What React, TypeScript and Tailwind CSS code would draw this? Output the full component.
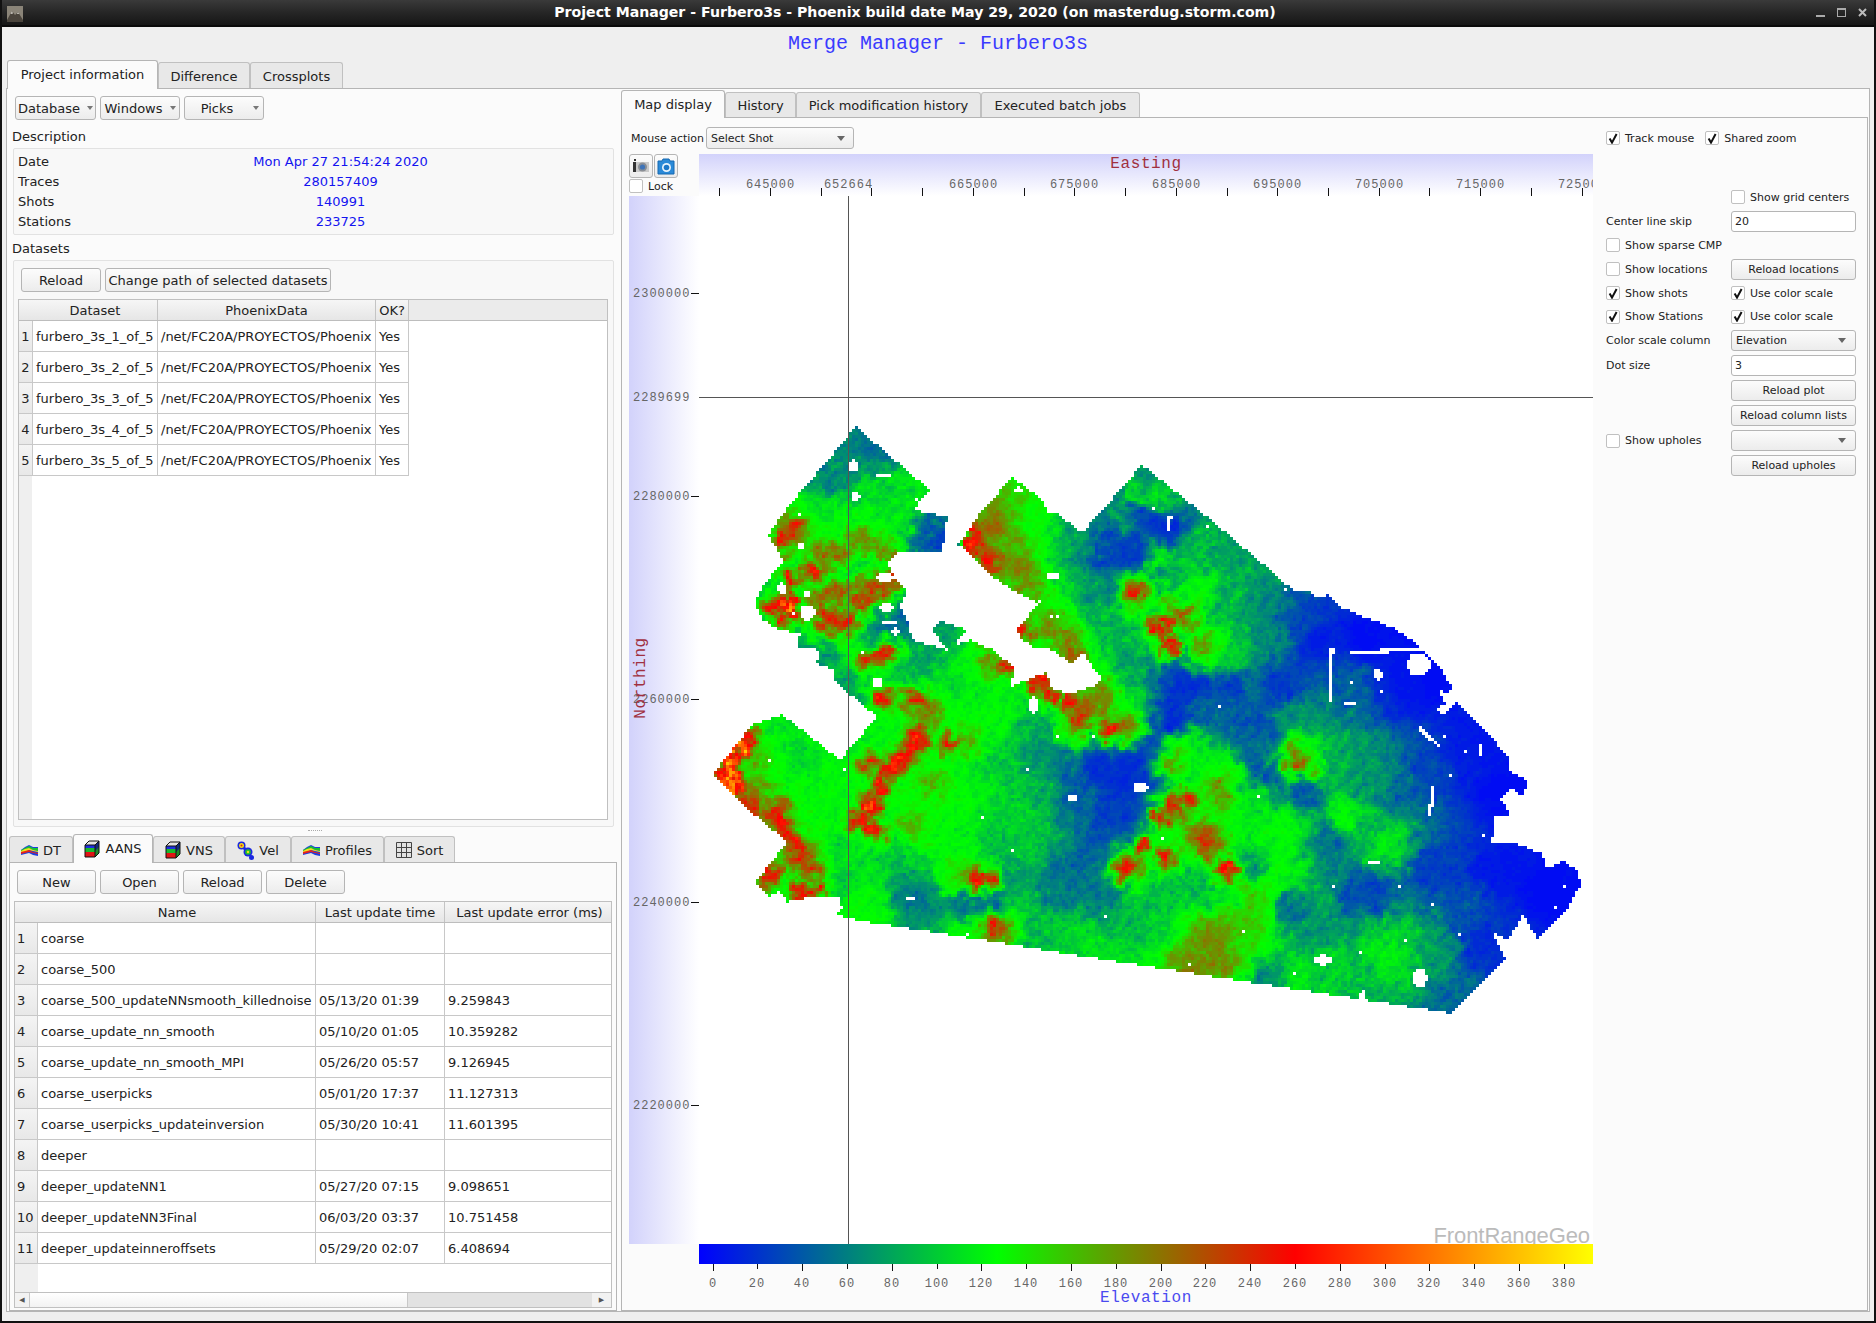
import { useMemo, type ReactNode } from 'react';

// ---- elevation map data, in page coordinates ----
const OUTLINE: number[][] = [
  [856,427],[930,490],[913,510],[947,517],[942,553],[900,552],[887,563],[893,575],[908,590],[900,607],[907,620],[913,640],[948,650],[932,630],[940,621],[967,630],[953,647],[970,640],[993,650],[1013,667],[1012,687],[1022,682],[1047,672],[1053,690],[1070,693],[1093,687],[1102,680],[1093,667],[1083,653],[1072,665],[1053,650],[1033,647],[1023,640],[1015,630],[1028,617],[1038,603],[1013,590],[993,577],[987,570],[968,552],[958,545],[967,533],[977,517],[1007,483],[1013,477],[1020,483],[1043,500],[1047,512],[1058,513],[1077,530],[1083,532],[1142,465],[1192,505],[1207,517],[1250,553],[1293,590],[1312,592],[1313,597],[1330,595],[1340,607],[1367,618],[1393,628],[1413,641],[1440,668],[1452,687],[1447,693],[1440,691],[1445,704],[1438,718],[1458,702],[1483,729],[1510,758],[1510,771],[1528,781],[1523,796],[1512,789],[1500,798],[1512,817],[1495,815],[1493,836],[1490,844],[1513,842],[1543,854],[1545,869],[1565,861],[1577,871],[1581,884],[1567,909],[1537,938],[1523,915],[1508,940],[1493,932],[1505,959],[1450,1013],[1100,959],[933,932],[867,922],[837,915],[842,908],[838,897],[810,897],[787,902],[780,890],[770,897],[755,883],[787,842],[743,805],[712,775],[753,724],[783,715],[840,760],[877,717],[833,680],[833,670],[817,663],[820,650],[798,647],[800,633],[780,630],[763,620],[755,602],[765,583],[785,560],[780,557],[777,548],[768,535],[787,508],
];

// x, y, elevation
const SPOTS: number[][] = [
  [856,435,60],[880,450,50],[850,470,70],[830,480,65],[870,490,110],[900,490,105],[920,495,115],[830,510,110],[800,520,115],[860,530,120],[790,530,230],[780,535,245],[780,545,250],[810,540,130],[900,520,110],[930,530,45],[940,540,30],[915,545,40],[840,555,190],[825,558,200],[860,575,60],[830,580,110],[790,580,260],[810,572,255],[785,600,290],[790,603,340],[775,605,265],[795,615,270],[780,620,270],[860,625,55],[880,610,55],[900,610,40],[890,630,45],[830,640,60],[860,660,110],[920,660,80],[950,680,100],[990,660,190],[1005,665,250],[1010,668,260],[850,690,80],[880,700,120],[883,698,265],[913,700,265],[925,710,200],[950,715,120],[1000,710,120],[980,760,100],
  [870,763,280],[882,787,265],[870,807,300],[920,737,270],[947,743,245],[933,780,170],[967,740,170],[940,803,125],[967,787,120],[900,787,125],[1033,787,90],[1000,800,100],[1020,850,90],
  [1100,770,15],[1130,760,8],[1150,780,15],[1060,750,60],[1040,720,85],[1080,800,45],[1100,861,40],[1120,775,15],[1113,814,25],[1150,749,10],[1172,725,5],
  [1143,846,265],[1128,867,235],[1167,858,265],[1160,819,260],[1188,800,250],[1227,869,285],[1203,840,230],[1183,830,130],[1217,815,130],[1233,795,120],[1257,871,55],[1233,902,70],[1200,890,80],[1167,890,90],[1133,900,85],[1133,928,90],[1113,890,50],
  [1280,825,125],[1273,863,125],[1263,898,145],[1213,940,185],[1193,967,190],[1220,963,190],[1240,936,150],[1287,909,45],[1317,928,70],[1333,963,95],[1400,947,100],[1387,959,115],[1433,947,75],[1450,1005,50],[1367,993,85],[1300,982,110],[1267,974,60],
  [1367,890,30],[1433,871,25],[1500,871,5],[1550,890,0],[1467,909,35],[1483,944,15],[1300,741,95],[1297,760,215],[1317,771,120],[1287,718,75],[1333,764,80],[1307,787,30],[1267,783,25],[1260,756,40],[1280,687,18],[1233,680,8],[1200,680,10],[1183,695,15],[1200,710,50],[1233,725,45],[1250,756,55],[1267,725,30],
  [1343,817,125],[1383,844,110],[1367,833,85],[1333,840,50],[1400,794,50],[1373,779,70],[1433,775,30],[1350,680,45],[1400,680,5],[1467,756,10],[1317,641,8],[1367,641,0],[1433,680,0],[1300,622,30],[1267,603,65],[1267,641,65],[1233,603,85],[1233,641,100],[1217,664,90],[1500,790,0],[1420,630,0],[1480,745,5],
  [1142,473,70],[1133,496,120],[1160,500,110],[1140,515,25],[1120,525,100],[1167,527,10],[1120,542,20],[1190,546,90],[1217,557,80],[1200,584,120],[1157,557,120],[1150,580,50],[1140,595,170],[1137,594,240],[1120,595,50],[1157,595,40],[1167,603,170],[1183,615,200],[1157,628,265],[1170,626,250],[1167,645,250],[1200,649,190],[1223,641,100],[1233,668,115],[1140,641,90],[1133,680,85],[1100,699,190],[1113,729,265],[1133,725,110],[1170,680,30],[1183,680,12],[1207,668,10],[1180,741,130],[1170,764,170],[1200,756,110],[1233,768,115],[1260,794,115],[1217,787,185],
  [1000,503,165],[993,527,200],[977,537,265],[973,547,280],[990,560,250],[1017,570,200],[1033,580,170],[1033,520,130],[1067,547,95],[1083,560,70],[1100,553,30],[1110,533,25],[1133,553,15],[1150,520,20],[1117,500,60],[1083,540,70],[1067,587,100],[1083,593,70],[1100,613,85],[1047,627,185],[1067,643,190],[1073,653,210],[1023,630,265],[1050,613,120],[1133,620,85],[1137,593,220],[1160,630,265],
  [1040,683,265],[1048,697,265],[1070,703,260],[1077,720,220],[1107,730,255],[1120,727,200],[1083,713,210],[1100,697,160],[1127,687,100],[1150,660,70],[1050,720,80],[1067,737,110],[1050,753,70],[1067,767,45],[1173,803,225],
  [733,753,260],[743,747,340],[733,787,340],[727,770,280],[750,737,260],[757,753,170],[783,737,110],[800,753,95],[817,787,115],[767,787,140],[750,803,230],[773,813,170],[800,803,125],
  [777,813,260],[785,827,265],[793,840,260],[800,857,230],[808,867,230],[770,877,265],[800,893,265],[813,890,250],[860,820,265],[873,830,275],[913,827,170],[917,897,60],[967,907,45],[993,907,25],[860,907,125],[967,930,125],[977,878,265],[960,878,150],[993,877,240],[993,930,230],[833,880,90],[850,853,105],[900,857,90],[933,830,115],[817,830,120],[766,825,160],[1017,909,95],[1029,945,90],[1077,945,100],[1029,837,95],[1100,957,105],
  [820,720,120],[900,720,122],[960,800,122],[860,850,105],[830,760,124],[800,700,122],[1000,880,70],[1060,880,55],[1160,930,100],[1040,660,122],[900,650,90],
  [985,510,165],[1010,530,165],[1000,550,165],[1020,555,160],[1040,600,150],[1060,620,150],
];

// x1, y1, x2, y2, elevation
const RIDGES: number[][] = [
  [860,540,890,555,175],[820,600,890,580,210],[825,620,845,622,235],[870,660,890,650,245],[887,770,913,747,265],[850,570,880,565,60],[733,747,727,790,330],[777,813,793,840,260],[860,600,900,575,215],[1193,965,1255,895,165],
];

// ellipses in the survey with no data: x1, y1, x2, y2
const HOLES: number[][] = [
  [848,460,858,472],[877,474,892,478],[852,492,860,502],[778,583,787,595],[803,590,810,597],[800,605,815,620],[877,573,893,583],[882,620,897,625],[892,628,900,635],[880,602,893,613],[872,677,882,687],[1047,573,1060,580],[1028,697,1038,713],[1067,795,1077,802],[1133,783,1148,793],[1015,487,1022,493],[798,543,805,548],[1407,653,1430,676],[1373,668,1382,680],[1343,703,1358,706],[1478,745,1483,756],[1367,861,1380,865],[1315,955,1332,965],[1412,968,1427,988],[1360,990,1365,1001],[907,897,914,900],
];

// thin cuts: x1, y1, x2, y2
const CUTS: number[][] = [
  [1332,649,1330,699],[1353,653,1385,651],[1385,651,1420,649],[1433,787,1430,814],[1420,729,1438,745],[1438,710,1453,702],[1170,517,1168,528],
];

const hash = (x: number, y: number) => {
  const s = Math.sin(x * 127.1 + y * 311.7) * 43758.5453;
  return s - Math.floor(s);
};

const valueNoise = (x: number, y: number) => {
  const ix = Math.floor(x);
  const iy = Math.floor(y);
  const fx = x - ix;
  const fy = y - iy;
  const a = hash(ix, iy);
  const b = hash(ix + 1, iy);
  const c = hash(ix, iy + 1);
  const d = hash(ix + 1, iy + 1);
  return (a * (1 - fx) + b * fx) * (1 - fy) + (c * (1 - fx) + d * fx) * fy;
};

const inside = (x: number, y: number) => {
  let hit = false;
  for (let i = 0, j = OUTLINE.length - 1; i < OUTLINE.length; j = i++) {
    const [xi, yi] = OUTLINE[i];
    const [xj, yj] = OUTLINE[j];
    if (yi > y !== yj > y && x < ((xj - xi) * (y - yi)) / (yj - yi) + xi) hit = !hit;
  }
  return hit;
};

const inHole = (x: number, y: number) => {
  for (const [a, b, c, d] of HOLES) {
    const rx = (c - a) / 2;
    const ry = (d - b) / 2;
    const dx = (x - (a + c) / 2) / rx;
    const dy = (y - (b + d) / 2) / ry;
    if (dx * dx + dy * dy < 1) return true;
  }
  for (const [a, b, c, d] of CUTS) {
    const vx = c - a;
    const vy = d - b;
    const t = Math.max(0, Math.min(1, ((x - a) * vx + (y - b) * vy) / (vx * vx + vy * vy)));
    const px = a + vx * t - x;
    const py = b + vy * t - y;
    if (px * px + py * py < 3) return true;
  }
  return false;
};

const elevationColor = (e: number) => {
  const t = Math.max(0, Math.min(399, e + 6)) / 133;
  const f = t % 1;
  if (t < 1) return `rgb(0,${Math.round(f * 255)},${Math.round((1 - f) * 255)})`;
  if (t < 2) return `rgb(${Math.round(f * 255)},${Math.round((1 - f) * 255)},0)`;
  return `rgb(255,${Math.round(f * 255)},0)`;
};

function buildMapPaths() {
  const all = [...SPOTS];
  for (const [a, b, c, d, e] of RIDGES) {
    const n = Math.ceil(Math.hypot(c - a, d - b) / 8);
    for (let i = 0; i <= n; i++) all.push([a + ((c - a) * i) / n, b + ((d - b) * i) / n, e]);
  }
  // low ground is interpolated, high ground sits on top as narrow bumps
  const low = all.filter((p) => p[2] < 170);
  const peaks = all.filter((p) => p[2] >= 170);
  const buckets = new Map<number, string[]>();
  const cell = 3;
  for (let y = 426; y < 1016; y += cell) {
    for (let x = 711; x < 1584; x += cell) {
      const cx = x + 1.5;
      const cy = y + 1.5;
      if (!inside(cx, cy) || inHole(cx, cy)) continue;
      if (hash(x * 0.37, y * 0.91) < 0.0012) continue;
      // crumple the lookup so that regions get ragged edges
      const wx = cx + (valueNoise(cx / 6, cy / 6) - 0.5) * 16;
      const wy = cy + (valueNoise(cy / 6 + 40, cx / 6) - 0.5) * 16;
      let sum = 0;
      let weight = 0;
      for (const p of low) {
        const dx = p[0] - wx;
        const dy = p[1] - wy;
        const d = dx * dx + dy * dy + 120;
        const w = 1 / (d * d);
        sum += p[2] * w;
        weight += w;
      }
      const base = sum / weight;
      let e = base;
      for (const p of peaks) {
        const dx = p[0] - wx;
        const dy = p[1] - wy;
        const sigma = p[2] > 300 ? 6 : p[2] >= 240 ? 8 : 13;
        const g = Math.exp(-(dx * dx + dy * dy) / (2 * sigma * sigma));
        e = Math.max(e, base + (p[2] - base) * g);
      }
      const amp = Math.min(1, base / 50 + 0.08);
      const bump = 1 + Math.max(0, e - base) / 120;
      e += amp * bump * ((valueNoise(cx / 4, cy / 4) - 0.5) * 26 + (valueNoise((cx + cy) / 7, (cx - cy) / 18) - 0.5) * 20 + (hash(x, y) - 0.5) * 12);
      // mid elevations bunch up around pure green
      const off = e - 127;
      if (Math.abs(off) < 45) e = 127 + off * (0.45 + (0.55 * Math.abs(off)) / 45);
      const key = Math.round(e / 4) * 4;
      if (!buckets.has(key)) buckets.set(key, []);
      buckets.get(key)!.push(`M${x} ${y}h3v3h-3z`);
    }
  }
  return [...buckets.entries()].map(([key, list]) => ({ color: elevationColor(key), d: list.join('') }));
}

// ---- small widgets ----
const btnBase = 'flex items-center rounded-[3px] border border-[#b5b5b5] bg-gradient-to-b from-[#fcfcfc] to-[#ececec] text-[#222]';
const btn = `${btnBase} justify-center`;

function TabBtn({ active, className, children }: { active?: boolean; className: string; children: ReactNode }) {
  return active ? (
    <div className={`relative z-10 -mb-px flex items-center justify-center gap-[5px] rounded-t-[3px] border border-b-0 border-[#b5b5b5] bg-[#fbfbfb] pb-px ${className}`}>{children}</div>
  ) : (
    <div className={`mt-[2px] flex items-center justify-center gap-[5px] rounded-t-[3px] border border-b-0 border-[#c0c0c0] bg-[#e8e8e8] pt-px ${className}`}>{children}</div>
  );
}

function Caret() {
  return (
    <svg width="8" height="5" viewBox="0 0 8 5" className="shrink-0">
      <path d="M0 0h8L4 5z" fill="#666" />
    </svg>
  );
}

function TinyCaret() {
  return (
    <svg width="6" height="4" viewBox="0 0 6 4" className="shrink-0">
      <path d="M0 0h6L3 4z" fill="#777" />
    </svg>
  );
}

function Check({ on, label, className = '' }: { on?: boolean; label: string; className?: string }) {
  return (
    <div className={`flex items-center gap-[5px] ${className}`}>
      <div className="flex h-[14px] w-[14px] shrink-0 items-center justify-center rounded-[2px] border border-[#c0c0c0] bg-white">
        {on && (
          <svg width="10" height="11" viewBox="0 0 10 11">
            <path d="M1.6 5.6 4 9.6 8.6 1" fill="none" stroke="#111" strokeWidth="2" />
          </svg>
        )}
      </div>
      <span>{label}</span>
    </div>
  );
}

function WaveIcon() {
  return (
    <svg width="17" height="12" viewBox="0 0 17 12" className="shrink-0">
      <path d="M0 6 4 3 8 1l4 2 5 0v9l-5-1-4-2-4 1-4 1z" fill="#1c3fe0" />
      <path d="M0 6 4 4 8 2l4 2 5 0v3l-5-1-4-2-4 2-4 1z" fill="#18c42c" />
      <path d="M0 7 4 5 8 4l4 2 5 1v1l-5-1-4-1-4 2-4 1z" fill="#f2e11c" />
      <path d="M0 8 4 7l4-1 4 2 5 1v1l-5-1-4-1-4 1-4 1z" fill="#e8231a" />
    </svg>
  );
}

function CubeIcon() {
  return (
    <svg width="16" height="18" viewBox="0 0 16 18" className="shrink-0">
      <path d="M1 5h10v12H1z" fill="#e01414" />
      <path d="M1 5h10v4H1z" fill="#1c2fe0" />
      <path d="M1 8h10v4H1z" fill="#18b82c" />
      <path d="M11 5l4-4v12l-4 4z" fill="#122a7a" />
      <path d="M11 11l4-4v6l-4 4z" fill="#1f8a2a" />
      <path d="M1 5l4-4h10l-4 4z" fill="#e4e4e4" />
      <path d="M1 5l4-4h10v12l-4 4H1zM1 5h10v12M11 5l4-4" fill="none" stroke="#111" strokeWidth="1" />
    </svg>
  );
}

function VelIcon() {
  return (
    <svg width="17" height="19" viewBox="0 0 17 19" className="shrink-0">
      <circle cx="4.5" cy="4.5" r="4" fill="#1a28e0" />
      <circle cx="11" cy="11" r="4.5" fill="#1a28e0" />
      <circle cx="14.5" cy="16.5" r="2.5" fill="#1a28e0" />
      <path d="M6 6l5 5" stroke="#1a28e0" strokeWidth="3" />
      <circle cx="4.5" cy="4.5" r="2.5" fill="#f0dc1c" />
      <circle cx="11" cy="11" r="2.8" fill="#22c02c" />
      <circle cx="4.5" cy="4.5" r="1" fill="#e0201c" />
      <circle cx="11" cy="11" r="1.2" fill="#f0dc1c" />
    </svg>
  );
}

function GridIcon() {
  return (
    <svg width="16" height="16" viewBox="0 0 16 16" className="shrink-0">
      <path d="M.5.5h15v15H.5z" fill="#e2e2e2" stroke="#444" />
      <path d="M5.5.5v15M10.5.5v15M.5 5.5h15M.5 10.5h15" stroke="#444" />
    </svg>
  );
}

function CameraIcon({ blue }: { blue?: boolean }) {
  return blue ? (
    <svg width="18" height="18" viewBox="0 0 18 18">
      <path d="M1 4h4l1-2h6l1 2h4v13H1z" fill="#2a8ad8" stroke="#1668b0" />
      <circle cx="9.5" cy="10.5" r="4.5" fill="#e8f4fc" />
      <circle cx="9.5" cy="10.5" r="2.8" fill="#1c78c8" />
    </svg>
  ) : (
    <svg width="18" height="18" viewBox="0 0 18 18">
      <path d="M4 5h13v10H4z" fill="#c9c9c9" />
      <path d="M1 5h3v10H1zM2 2h2v2H2z" fill="#333" />
      <circle cx="10.5" cy="10" r="4.5" fill="#8a8f96" />
      <circle cx="10.5" cy="10" r="2.6" fill="#3f74b8" />
    </svg>
  );
}

function Row({ h, left, right }: { h: string; left?: ReactNode; right?: ReactNode }) {
  return (
    <div className={`grid grid-cols-[125px_125px] items-center ${h}`}>
      <div className="flex items-center">{left}</div>
      <div>{right}</div>
    </div>
  );
}

const DATASETS = ['furbero_3s_1_of_5', 'furbero_3s_2_of_5', 'furbero_3s_3_of_5', 'furbero_3s_4_of_5', 'furbero_3s_5_of_5'];

const MODELS = [
  ['coarse', '', ''],
  ['coarse_500', '', ''],
  ['coarse_500_updateNNsmooth_killednoise', '05/13/20 01:39', '9.259843'],
  ['coarse_update_nn_smooth', '05/10/20 01:05', '10.359282'],
  ['coarse_update_nn_smooth_MPI', '05/26/20 05:57', '9.126945'],
  ['coarse_userpicks', '05/01/20 17:37', '11.127313'],
  ['coarse_userpicks_updateinversion', '05/30/20 10:41', '11.601395'],
  ['deeper', '', ''],
  ['deeper_updateNN1', '05/27/20 07:15', '9.098651'],
  ['deeper_updateNN3Final', '06/03/20 03:37', '10.751458'],
  ['deeper_updateinneroffsets', '05/29/20 02:07', '6.408694'],
];

const headCell = 'flex items-center justify-center border-r border-[#c4c4c4] bg-gradient-to-b from-[#f6f6f6] to-[#e6e6e6]';
const bodyCell = 'flex items-center border-r border-b border-[#c8c8c8] pl-[3px]';
const gutterCell = 'flex items-center border-r border-b border-[#c8c8c8] bg-gradient-to-b from-[#f4f4f4] to-[#e8e8e8]';

function MapChart() {
  const paths = useMemo(buildMapPaths, []);
  const topTicks = Array.from({ length: 18 }, (_, i) => 719.3 + i * 50.72);
  const topLabels: [string, number][] = [['645000', 770], ['652664', 848], ['665000', 973], ['675000', 1074], ['685000', 1176], ['695000', 1277], ['705000', 1379], ['715000', 1480], ['725000', 1582]];
  const leftLabels: [string, number][] = [['2300000', 293], ['2280000', 496], ['2260000', 699], ['2240000', 902], ['2220000', 1105]];
  const scale = Array.from({ length: 20 }, (_, i) => i * 20);
  const axisText = "font-['Liberation_Mono',monospace] text-[12px] tracking-[1px] fill-[#666]";
  const titleText = "font-['Liberation_Mono',monospace] text-[16px] tracking-[0.6px]";

  return (
    <svg width="964" height="1156" viewBox="629 154 964 1156" className="block">
      <defs>
        <linearGradient id="bandTop" x1="0" y1="0" x2="0" y2="1">
          <stop offset="0" stopColor="#d2d2fb" />
          <stop offset="1" stopColor="#ffffff" />
        </linearGradient>
        <linearGradient id="bandLeft" x1="0" y1="0" x2="1" y2="0">
          <stop offset="0" stopColor="#d2d2fb" />
          <stop offset="1" stopColor="#ffffff" />
        </linearGradient>
        <linearGradient id="colorBar" x1="0" y1="0" x2="1" y2="0">
          <stop offset="0" stopColor="#0000ff" />
          <stop offset="0.3333" stopColor="#00ff00" />
          <stop offset="0.6667" stopColor="#ff0000" />
          <stop offset="1" stopColor="#ffff00" />
        </linearGradient>
        <clipPath id="topClip">
          <rect x="699" y="154" width="894" height="42" />
        </clipPath>
      </defs>
      <rect x="699" y="154" width="894" height="42" fill="url(#bandTop)" />
      <rect x="629" y="196" width="70" height="1048" fill="url(#bandLeft)" />
      <rect x="699" y="196" width="894" height="1048" fill="#fff" />

      <text x="1146" y="168" textAnchor="middle" fill="#a03040" className={titleText}>Easting</text>
      <g clipPath="url(#topClip)">
        {topLabels.map(([t, x]) => (
          <text key={t} x={x + 0.5} y="188" textAnchor="middle" className={axisText}>{t}</text>
        ))}
        {topTicks.map((x) => (
          <path key={x} d={`M${Math.round(x) + 0.5} 188v8`} stroke="#111" />
        ))}
      </g>

      {leftLabels.map(([t, y]) => (
        <g key={t}>
          <text x="633" y={y + 4} className={axisText}>{t}</text>
          <path d={`M691 ${y + 0.5}h8`} stroke="#111" />
        </g>
      ))}
      <text x="633" y="401" className={axisText}>2289699</text>
      <text transform="translate(645 678) rotate(-90)" textAnchor="middle" fill="#a03040" className={titleText}>Northing</text>

      <g shapeRendering="crispEdges">
        {paths.map((p) => (
          <path key={p.color} d={p.d} fill={p.color} />
        ))}
      </g>

      <path d="M848.5 196V1244M699 397.5H1593" stroke="#555" shapeRendering="crispEdges" />

      <text x="1590" y="1243" textAnchor="end" fill="#bbb" className="font-['Liberation_Sans',sans-serif] text-[22px] tracking-[-0.1px]">FrontRangeGeo</text>

      <rect x="699" y="1244" width="894" height="20" fill="url(#colorBar)" />
      {scale.map((v, i) => {
        const x = Math.round(712.5 + v * 2.2405);
        return (
          <g key={v}>
            <path d={`M${x + 0.5} 1264v${i % 2 ? 5 : 7}`} stroke="#111" />
            <text x={x} y="1287" textAnchor="middle" className={axisText}>{v}</text>
          </g>
        );
      })}
      <text x="1146" y="1302" textAnchor="middle" fill="#4a4af0" className={titleText}>Elevation</text>
    </svg>
  );
}

export default function App() {
  return (
    <div className="flex h-[1323px] w-[1876px] flex-col overflow-hidden border-x-2 border-b-2 border-[#111] bg-[#efefef] font-['DejaVu_Sans',sans-serif] text-[13px] leading-none text-[#222]">
      {/* window title bar */}
      <div className="-mx-[2px] relative flex h-[27px] shrink-0 items-center justify-center border-b-2 border-[#0a0a0a] bg-gradient-to-b from-[#3a3a3a] via-[#262626] to-[#161616] pr-[46px] text-[14.1px] font-bold text-white">
        <svg width="16" height="16" viewBox="0 0 16 16" className="absolute left-[7px] top-[6px]">
          <rect width="16" height="16" fill="#8a8478" />
          <path d="M0 14 5 5l3 4 3-3 5 8v2H0z" fill="#4a443c" />
          <path d="M5 5 3.5 8 6 7.5zM11 6l-1 2 2 0z" fill="#d8d4cc" />
        </svg>
        <span>Project Manager - Furbero3s - Phoenix build date May 29, 2020 (on masterdug.storm.com)</span>
        <div className="absolute right-[9px] top-[7px] flex items-center gap-[12px]">
          <div className="mt-[8px] h-[2px] w-[9px] bg-[#aaa]" />
          <div className="h-[9px] w-[9px] border border-t-2 border-[#aaa]" />
          <svg width="9" height="9" viewBox="0 0 9 9">
            <path d="M1 1l7 7M8 1 1 8" stroke="#bbb" strokeWidth="2" />
          </svg>
        </div>
      </div>

      <div className="flex h-[33px] shrink-0 items-center justify-center pt-px font-['Liberation_Mono',monospace] text-[20px] text-[#3a3aff]">
        Merge Manager - Furbero3s
      </div>

      {/* outer tabs */}
      <div className="ml-[5px] flex h-[28px] shrink-0 items-stretch">
        <TabBtn active className="w-[151px]">Project information</TabBtn>
        <TabBtn className="w-[92px]">Difference</TabBtn>
        <TabBtn className="w-[93px]">Crossplots</TabBtn>
      </div>

      <div className="ml-[4px] flex h-[1224px] w-[1864px] shrink-0 border border-[#b5b5b5] bg-[#fbfbfb]">
        {/* left side */}
        <div className="flex w-[613px] shrink-0 flex-col pl-[2px]">
          <div className="mt-[7px] flex h-[24px] gap-[4px] pl-[6px]">
            <div className={`${btn} w-[81px] gap-[7px]`}>Database<TinyCaret /></div>
            <div className={`${btn} w-[80px] gap-[7px]`}>Windows<TinyCaret /></div>
            <div className={`${btn} w-[80px] gap-[20px] pl-[12px]`}>Picks<TinyCaret /></div>
          </div>
          <div className="flex h-[28px] items-center pl-[3px] pt-[5px]">Description</div>
          <div className="ml-[4px] h-[87px] w-[601px] rounded-[2px] border border-[#e2e2e2] bg-[#f8f8f8] py-[2px]">
            {[
              ['Date', 'Mon Apr 27 21:54:24 2020'],
              ['Traces', '280157409'],
              ['Shots', '140991'],
              ['Stations', '233725'],
            ].map(([k, v]) => (
              <div key={k} className="flex h-[20px] items-center pl-[4px]">
                <span className="w-[50px]">{k}</span>
                <span className="flex-1 text-center text-[#1414f0]">{v}</span>
              </div>
            ))}
          </div>
          <div className="flex h-[25px] items-center pl-[3px] pt-[2px]">Datasets</div>
          <div className="ml-[4px] flex h-[567px] w-[601px] flex-col rounded-[2px] border border-[#e2e2e2] bg-[#f8f8f8] pl-[4px] pt-[7px]">
            <div className="flex h-[24px] gap-[4px] pl-[3px]">
              <div className={`${btn} w-[80px]`}>Reload</div>
              <div className={`${btn} w-[226px]`}>Change path of selected datasets</div>
            </div>
            <div className="mt-[7px] flex h-[521px] w-[590px] flex-col border border-[#c0c0c0] bg-white">
              <div className="flex h-[21px] shrink-0 border-b border-[#bdbdbd] bg-[#ebebeb]">
                <div className={`${headCell} w-[139px] pl-[14px]`}>Dataset</div>
                <div className={`${headCell} w-[218px]`}>PhoenixData</div>
                <div className={`${headCell} w-[33px]`}>OK?</div>
              </div>
              {DATASETS.map((d, i) => (
                <div key={d} className="flex h-[31px] shrink-0">
                  <div className={`${gutterCell} w-[14px] justify-center`}>{i + 1}</div>
                  <div className={`${bodyCell} w-[125px]`}>{d}</div>
                  <div className={`${bodyCell} w-[218px]`}>/net/FC20A/PROYECTOS/Phoenix</div>
                  <div className={`${bodyCell} w-[33px]`}>Yes</div>
                </div>
              ))}
              <div className="min-h-0 flex-1">
                <div className="h-full w-[13px] bg-[#efefef]" />
              </div>
            </div>
          </div>

          <div className="flex h-[7px] items-center justify-center">
            <div className="h-px w-[14px] border-t border-dotted border-[#aaa]" />
          </div>

          {/* lower tabs */}
          <div className="flex h-[28px] shrink-0 items-stretch">
            <TabBtn className="w-[64px]"><WaveIcon />DT</TabBtn>
            <TabBtn active className="w-[80px]"><CubeIcon />AANS</TabBtn>
            <TabBtn className="w-[72px]"><CubeIcon />VNS</TabBtn>
            <TabBtn className="w-[66px]"><VelIcon />Vel</TabBtn>
            <TabBtn className="w-[93px]"><WaveIcon />Profiles</TabBtn>
            <TabBtn className="w-[71px]"><GridIcon />Sort</TabBtn>
          </div>
          <div className="flex h-[449px] w-[608px] flex-col border border-[#b5b5b5] bg-[#fbfbfb] pl-[4px] pt-[7px]">
            <div className="flex h-[24px] gap-[4px] pl-[3px]">
              {['New', 'Open', 'Reload', 'Delete'].map((b) => (
                <div key={b} className={`${btn} w-[79px]`}>{b}</div>
              ))}
            </div>
            <div className="mt-[7px] flex h-[407px] w-[598px] flex-col border border-[#c0c0c0] bg-white">
              <div className="flex h-[21px] shrink-0 border-b border-[#bdbdbd]">
                <div className={`${headCell} w-[301px] pl-[24px]`}>Name</div>
                <div className={`${headCell} w-[129px]`}>Last update time</div>
                <div className={`${headCell} flex-1 border-r-0 pl-[3px]`}>Last update error (ms)</div>
              </div>
              {MODELS.map((m, i) => (
                <div key={m[0]} className="flex h-[31px] shrink-0">
                  <div className={`${gutterCell} w-[23px] pl-[2px]`}>{i + 1}</div>
                  <div className={`${bodyCell} w-[278px]`}>{m[0]}</div>
                  <div className={`${bodyCell} w-[129px]`}>{m[1]}</div>
                  <div className={`${bodyCell} flex-1 border-r-0`}>{m[2]}</div>
                </div>
              ))}
              <div className="min-h-0 flex-1">
                <div className="h-full w-[23px] bg-[#efefef]" />
              </div>
              <div className="flex h-[15px] shrink-0 items-stretch border-t border-[#c0c0c0]">
                <div className="flex w-[14px] items-center justify-center bg-[#f2f2f2] text-[7px] text-[#555]">◀</div>
                <div className="w-[379px] border-x border-[#c8c8c8] bg-gradient-to-b from-[#ffffff] to-[#f2f2f2]" />
                <div className="flex-1 bg-[#e2e2e2]" />
                <div className="flex w-[19px] items-center justify-center bg-[#f2f2f2] text-[7px] text-[#555]">▶</div>
              </div>
            </div>
          </div>
        </div>

        {/* right side */}
        <div className="flex min-w-0 flex-1 flex-col pl-[1px]">
          <div className="mt-[1px] flex h-[27px] shrink-0 items-stretch">
            <TabBtn active className="w-[104px]">Map display</TabBtn>
            <TabBtn className="w-[71px]">History</TabBtn>
            <TabBtn className="w-[185px]">Pick modification history</TabBtn>
            <TabBtn className="w-[159px]">Executed batch jobs</TabBtn>
          </div>
          <div className="flex h-[1194px] w-[1247px] border border-[#b5b5b5] bg-[#fbfbfb]">
            <div className="w-[972px] shrink-0 pl-[7px] pt-[9px]">
              <div className="flex h-[22px] items-center pl-[2px] text-[11px]">
                <span className="w-[75px]">Mouse action</span>
                <div className={`${btnBase} h-[22px] w-[148px] justify-between pl-[4px] pr-[8px]`}>Select Shot<Caret /></div>
              </div>
              <div className="relative mt-[5px]">
                <MapChart />
                <div className="absolute left-0 top-0 text-[11px]">
                  <div className="flex gap-px">
                    <div className={`${btn} h-[24px] w-[24px]`}><CameraIcon /></div>
                    <div className={`${btn} h-[24px] w-[24px]`}><CameraIcon blue /></div>
                  </div>
                  <Check label="Lock" className="mt-px" />
                </div>
              </div>
            </div>
            <div className="pl-[12px] pt-[9px] text-[11px]">
              <div className="flex h-[22px] items-center gap-[11px]">
                <Check on label="Track mouse" />
                <Check on label="Shared zoom" />
              </div>
              <div className="h-[36px]" />
              <Row h="h-[24px]" right={<Check label="Show grid centers" />} />
              <Row h="h-[24px]" left="Center line skip" right={<div className="flex h-[21px] items-center rounded-[3px] border border-[#b5b5b5] bg-white pl-[3px]">20</div>} />
              <Row h="h-[24px]" left={<Check label="Show sparse CMP" />} />
              <Row h="h-[24px]" left={<Check label="Show locations" />} right={<div className={`${btn} h-[21px]`}>Reload locations</div>} />
              <Row h="h-[24px]" left={<Check on label="Show shots" />} right={<Check on label="Use color scale" />} />
              <Row h="h-[23px]" left={<Check on label="Show Stations" />} right={<Check on label="Use color scale" />} />
              <Row h="h-[25px]" left="Color scale column" right={<div className={`${btnBase} h-[21px] justify-between pl-[4px] pr-[9px]`}>Elevation<Caret /></div>} />
              <Row h="h-[25px]" left="Dot size" right={<div className="flex h-[21px] items-center rounded-[3px] border border-[#b5b5b5] bg-white pl-[3px]">3</div>} />
              <Row h="h-[25px]" right={<div className={`${btn} h-[21px]`}>Reload plot</div>} />
              <Row h="h-[25px]" right={<div className={`${btn} h-[21px]`}>Reload column lists</div>} />
              <Row h="h-[25px]" left={<Check label="Show upholes" />} right={<div className={`${btnBase} h-[21px] justify-end pr-[9px]`}><Caret /></div>} />
              <Row h="h-[25px]" right={<div className={`${btn} h-[21px]`}>Reload upholes</div>} />
            </div>
          </div>
        </div>
      </div>
    </div>
  );
}
